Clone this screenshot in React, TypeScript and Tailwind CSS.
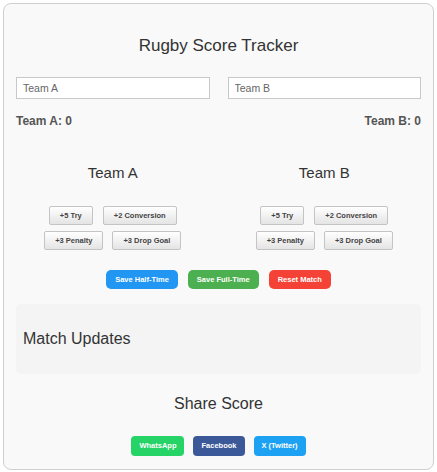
import React from 'react';

const font = { fontFamily: '"Liberation Sans", Arial, sans-serif' };

function TeamPanel({ name }: { name: string }) {
  const btn =
    'rounded-[2px] border border-[#c4c4c4] bg-gradient-to-b from-white to-[#e4e4e4] px-[10px] h-[19px] text-[7.5px] font-bold text-[#444] leading-none';
  return (
    <div className="flex flex-col items-center">
      <h2 className="text-[15px] leading-none text-[#333] mt-[38px]">{name}</h2>
      <div className="mt-[26px] flex gap-[10px]">
        <button className={btn}>+5 Try</button>
        <button className={btn}>+2 Conversion</button>
      </div>
      <div className="mt-[6px] flex gap-[9px]">
        <button className={btn}>+3 Penalty</button>
        <button className={btn}>+3 Drop Goal</button>
      </div>
    </div>
  );
}

export default function App() {
  const action = 'rounded-[5px] h-[19px] px-[9px] text-[7.5px] font-bold text-white leading-none';
  const share = 'rounded-[4px] h-[20px] px-[8px] text-[7.5px] font-bold text-white leading-none';
  return (
    <div className="bg-white p-[3px]" style={font}>
      <div className="h-[467px] rounded-[8px] border border-[#cfcfcf] bg-[#f9f9f9] px-[12px]">
        <h1 className="mt-[33px] text-center text-[17px] leading-none text-[#333]">Rugby Score Tracker</h1>
        <div className="mt-[23px] grid grid-cols-2 gap-[18px]">
          <input
            defaultValue="Team A"
            className="h-[22px] border border-[#c8c8c8] bg-white px-[6px] text-[10.5px] text-[#666] outline-none"
          />
          <input
            defaultValue="Team B"
            className="h-[22px] border border-[#c8c8c8] bg-white px-[6px] text-[10.5px] text-[#666] outline-none"
          />
        </div>
        <div className="mt-[16px] flex justify-between text-[12px] font-bold leading-none text-[#555]">
          <span>Team A: 0</span>
          <span>Team B: 0</span>
        </div>
        <div className="grid grid-cols-2 gap-[18px]">
          <TeamPanel name="Team A" />
          <TeamPanel name="Team B" />
        </div>
        <div className="mt-[20px] flex justify-center gap-[10px]">
          <button className={`${action} bg-[#2196f3]`}>Save Half-Time</button>
          <button className={`${action} bg-[#4caf50]`}>Save Full-Time</button>
          <button className={`${action} bg-[#f44336]`}>Reset Match</button>
        </div>
        <div className="mt-[15px] flex h-[70px] items-center rounded-[5px] bg-[#f4f4f4] px-[7px]">
          <h2 className="text-[16px] leading-none text-[#333]">Match Updates</h2>
        </div>
        <h2 className="mt-[22px] text-center text-[16px] leading-none text-[#333]">Share Score</h2>
        <div className="mt-[24px] flex justify-center gap-[9px]">
          <button className={`${share} bg-[#25d366]`}>WhatsApp</button>
          <button className={`${share} bg-[#3b5998]`}>Facebook</button>
          <button className={`${share} bg-[#1da1f2]`}>X (Twitter)</button>
        </div>
      </div>
    </div>
  );
}
